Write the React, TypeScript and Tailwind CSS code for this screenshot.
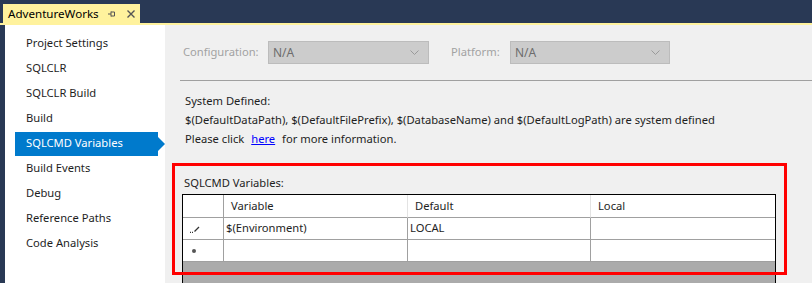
import React from 'react';

const navItems = [
  'Project Settings',
  'SQLCLR',
  'SQLCLR Build',
  'Build',
  'SQLCMD Variables',
  'Build Events',
  'Debug',
  'Reference Paths',
  'Code Analysis',
];

const Chevron = () => (
  <svg width="9" height="6" viewBox="0 0 9 6" className="text-[#9a9a9a]">
    <path d="M0.5 0.5 L4.5 4.5 L8.5 0.5" fill="none" stroke="currentColor" strokeWidth="1" />
  </svg>
);

const DisabledSelect = ({ width }: { width: string }) => (
  <div className={`flex h-[23px] items-center justify-between border border-[#bcbcbc] bg-[#cccccc] pl-[4px] pr-[9px] text-[#6d6d6d] ${width}`}>
    <span className="text-[12px]">N/A</span>
    <Chevron />
  </div>
);

const App = () => {
  return (
    <div className="flex h-[283px] w-[812px] flex-col overflow-hidden bg-[#293955] text-[11.2px] text-[#1e1e1e]" style={{ fontFamily: '"Noto Sans", "Open Sans", sans-serif' }}>
      {/* Document tab */}
      <div className="flex h-[23px] shrink-0 items-end pl-[3px]">
        <div className="flex h-[19px] w-[137px] items-center bg-[#fff29d] pl-[5px] text-[11.6px] text-black">
          <span>AdventureWorks</span>
          <svg width="10" height="10" viewBox="0 0 10 10" className="ml-[7px]">
            <path d="M2 5 H5 M5 2.5 V7.5 M5 3 H8.5 V7 H5" fill="none" stroke="#555" strokeWidth="1" />
          </svg>
          <svg width="10" height="10" viewBox="0 0 10 10" className="ml-[10px]">
            <path d="M1.5 1.5 L8.5 8.5 M8.5 1.5 L1.5 8.5" stroke="#555" strokeWidth="1.4" />
          </svg>
        </div>
      </div>
      <div className="h-[2px] shrink-0 bg-[#fff29d]" />

      <div className="flex min-h-0 flex-1 pl-[5px]">
        {/* Sidebar */}
        <div className="w-[160px] shrink-0 bg-white pt-[6px]">
          {navItems.map((item) => {
            const active = item === 'SQLCMD Variables';
            return (
              <div key={item} className="relative flex h-[25px] items-center">
                <div className={`ml-[10px] flex h-[24px] w-[143px] items-center pl-[11px] ${active ? 'bg-[#007acc] text-white' : 'text-[#1e1e1e]'}`}>
                  {item}
                </div>
                {active && (
                  <div className="h-0 w-0 border-y-[7px] border-l-[7px] border-y-transparent border-l-[#007acc]" />
                )}
              </div>
            );
          })}
        </div>

        {/* Content */}
        <div className="flex-1 bg-[#f0f0f0] pl-[15px]">
          <div className="flex h-[56px] items-center border-b border-[#a0a0a0]">
            <span className="ml-[3px] w-[85px] text-[#a2a2a2]">Configuration:</span>
            <DisabledSelect width="w-[161px]" />
            <span className="ml-[22px] w-[59px] text-[#a2a2a2]">Platform:</span>
            <DisabledSelect width="w-[160px]" />
          </div>

          <div className="ml-[5px] mt-[10px] leading-[19px]">
            <div>System Defined:</div>
            <div>$(DefaultDataPath), $(DefaultFilePrefix), $(DatabaseName) and $(DefaultLogPath) are system defined</div>
            <div>
              Please click <span className="ml-[4px] mr-[4px] text-[#0000ff] underline">here</span> for more information.
            </div>
          </div>

          {/* Highlighted variables section */}
          <div className="relative ml-[-8px] mt-[15px] h-[112px] w-[615px] border-[3px] border-[#ff0000] pl-[7px] pt-[9px]">
            <div className="ml-[2px]">SQLCMD Variables:</div>
          </div>
          <div className="ml-[2px] mt-[-81px] w-[594px] border-x border-t border-black">
            <div className="grid h-[23px] grid-cols-[41px_184px_183px_184px] bg-white">
              <div className="border-b border-r border-[#a0a0a0]" />
              <div className="flex items-center border-b border-r border-[#e3e3e3] border-b-[#a0a0a0] pl-[7px]">Variable</div>
              <div className="flex items-center border-b border-r border-[#e3e3e3] border-b-[#a0a0a0] pl-[7px]">Default</div>
              <div className="flex items-center border-b border-[#a0a0a0] pl-[7px]">Local</div>
            </div>
            <div className="grid h-[22px] grid-cols-[41px_184px_183px_184px] bg-white">
              <div className="flex items-center border-b border-r border-[#a0a0a0] pl-[7px]">
                <svg width="10" height="8" viewBox="0 0 10 8">
                  <path d="M0 7.5 H1 M2 7.5 H3 M4.5 6.5 L9 2" stroke="#333" strokeWidth="1.3" fill="none" />
                </svg>
              </div>
              <div className="flex items-center border-b border-r border-[#a0a0a0] pl-[2px]">$(Environment)</div>
              <div className="flex items-center border-b border-r border-[#a0a0a0] pl-[2px]">LOCAL</div>
              <div className="border-b border-[#a0a0a0]" />
            </div>
            <div className="grid h-[22px] grid-cols-[41px_184px_183px_184px] bg-white">
              <div className="flex items-center border-b border-r border-[#a0a0a0] pl-[9px]">
                <div className="h-[4px] w-[4px] rounded-full bg-[#555]" />
              </div>
              <div className="border-b border-r border-[#a0a0a0]" />
              <div className="border-b border-r border-[#a0a0a0]" />
              <div className="border-b border-[#a0a0a0]" />
            </div>
            <div className="h-[30px] bg-[#ababab]" />
          </div>
        </div>
      </div>
    </div>
  );
};

export default App;
